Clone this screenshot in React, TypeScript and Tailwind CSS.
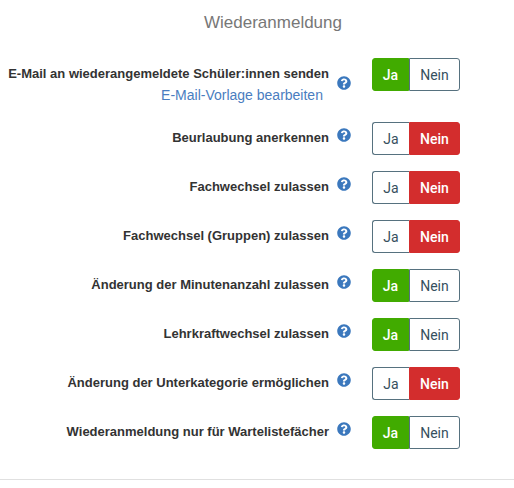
import { useState } from "react";
import type { ReactNode } from "react";
import { FaQuestionCircle } from "react-icons/fa";

type Setting = {
  id: string;
  label: string;
  enabled: boolean;
  link?: string;
};

const settings: Setting[] = [
  {
    id: "email",
    label: "E-Mail an wiederangemeldete Schüler:innen senden",
    enabled: true,
    link: "E-Mail-Vorlage bearbeiten",
  },
  { id: "beurlaubung", label: "Beurlaubung anerkennen", enabled: false },
  { id: "fachwechsel", label: "Fachwechsel zulassen", enabled: false },
  { id: "gruppen", label: "Fachwechsel (Gruppen) zulassen", enabled: false },
  { id: "minuten", label: "Änderung der Minutenanzahl zulassen", enabled: true },
  { id: "lehrkraft", label: "Lehrkraftwechsel zulassen", enabled: true },
  { id: "unterkategorie", label: "Änderung der Unterkategorie ermöglichen", enabled: false },
  { id: "warteliste", label: "Wiederanmeldung nur für Wartelistefächer", enabled: true },
];

function ToggleButton({
  className,
  pressed,
  onClick,
  children,
}: {
  className: string;
  pressed: boolean;
  onClick: () => void;
  children: ReactNode;
}) {
  return (
    <button
      type="button"
      aria-pressed={pressed}
      onClick={onClick}
      className={`border font-['Roboto',sans-serif] text-sm ${className}`}
    >
      {children}
    </button>
  );
}

function SettingRow({ setting }: { setting: Setting }) {
  const [enabled, setEnabled] = useState(setting.enabled);
  const labelId = `${setting.id}-label`;

  return (
    <div className="flex items-start">
      <div className="flex w-[64%] shrink-0 flex-col items-end pt-1.5 text-right">
        <span id={labelId} className="text-[13px] leading-5 font-bold whitespace-nowrap text-[#333]">
          {setting.label}
        </span>
        {setting.link && (
          <a href="#vorlage" className="mr-1.5 text-sm leading-[22px] text-[#4a7dc0] hover:underline">
            {setting.link}
          </a>
        )}
      </div>
      <button
        type="button"
        aria-label={`Hilfe: ${setting.label}`}
        className={`ml-2 shrink-0 text-sm text-[#3b78bd] ${setting.link ? "pt-[18px]" : "pt-1.5"}`}
      >
        <FaQuestionCircle />
      </button>
      <div role="group" aria-labelledby={labelId} className="ml-[21px] flex h-[33px] shrink-0">
        <ToggleButton
          pressed={enabled}
          onClick={() => setEnabled(true)}
          className={
            enabled
              ? "w-[37px] rounded-l-[3px] border-[#41ab00] bg-[#41ab00] font-medium text-white"
              : "w-[37px] rounded-l-[3px] border-r-0 border-[#56717f] bg-white text-[#36505e]"
          }
        >
          Ja
        </ToggleButton>
        <ToggleButton
          pressed={!enabled}
          onClick={() => setEnabled(false)}
          className={
            enabled
              ? "w-[51px] rounded-r-[3px] border-[#56717f] bg-white text-[#36505e]"
              : "w-[51px] rounded-r-[3px] border-[#d32d2d] bg-[#d32d2d] font-medium text-white"
          }
        >
          Nein
        </ToggleButton>
      </div>
    </div>
  );
}

export default function App() {
  return (
    <main className="bg-white font-['Liberation_Sans',Arial,sans-serif]">
      <section className="border-b border-[#e0e0e0] pb-[30px]">
        <h2 className="pt-[11px] pl-8 text-center text-[17px] leading-6 text-[#777]">
          Wiederanmeldung
        </h2>
        <div className="flex flex-col gap-4 pt-[23px]">
          {settings.map((setting) => (
            <SettingRow key={setting.id} setting={setting} />
          ))}
        </div>
      </section>
    </main>
  );
}
